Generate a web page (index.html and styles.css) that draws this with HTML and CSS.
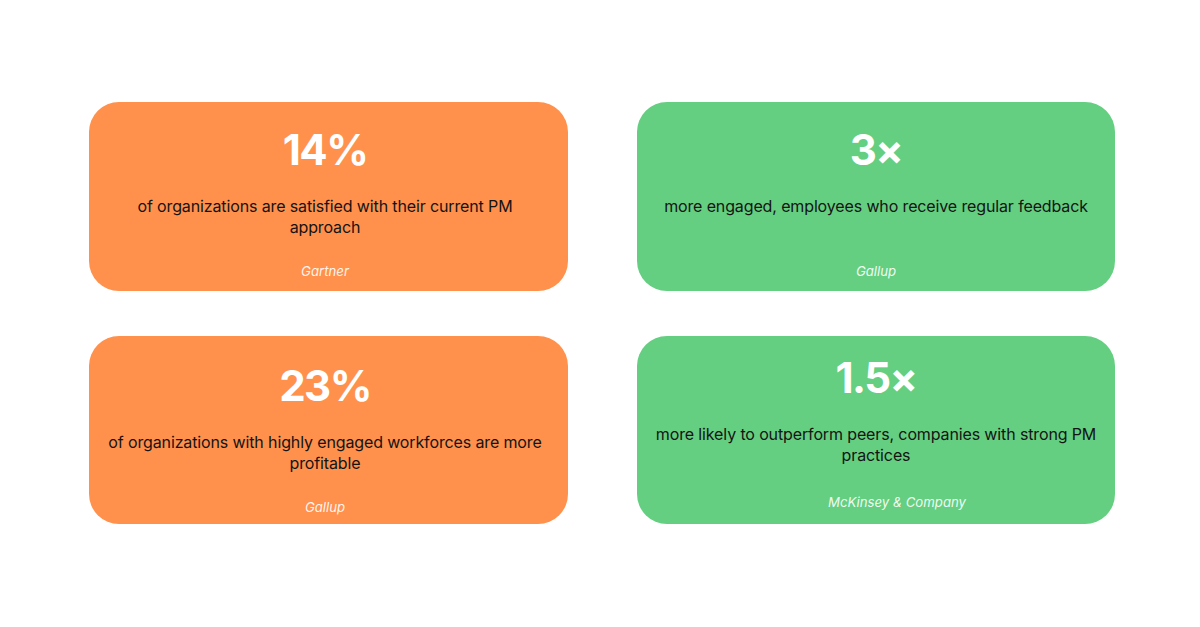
FILE: index.html
```html
<!DOCTYPE html>
<html lang="en">
<head>
<meta charset="utf-8">
<title>PM Statistics</title>
<link rel="stylesheet" href="styles.css">
</head>
<body>
<main class="grid">
  <section class="card card--orange">
    <div class="stat">14%</div>
    <p class="desc">of organizations are satisfied with their current PM approach</p>
    <div class="source">Gartner</div>
  </section>
  <section class="card card--green">
    <div class="stat">3×</div>
    <p class="desc">more engaged, employees who receive regular feedback</p>
    <div class="source">Gallup</div>
  </section>
  <section class="card card--orange card--low">
    <div class="stat">23%</div>
    <p class="desc">of organizations with highly engaged workforces are more profitable</p>
    <div class="source">Gallup</div>
  </section>
  <section class="card card--green card--high">
    <div class="stat">1.5×</div>
    <p class="desc">more likely to outperform peers, companies with strong PM practices</p>
    <div class="source source--shift">McKinsey &amp; Company</div>
  </section>
</main>
</body>
</html>
```

FILE: styles.css
```css
html, body {
  margin: 0;
  padding: 0;
  background: #ffffff;
}

body {
  width: 1200px;
  height: 627px;
  overflow: hidden;
  font-family: "Inter", "Noto Sans", sans-serif;
}

.grid {
  display: grid;
  grid-template-columns: 479px 478px;
  grid-template-rows: 189px 188px;
  column-gap: 69px;
  row-gap: 45px;
  padding: 102px 0 0 89px;
}

.card {
  display: flex;
  flex-direction: column;
  align-items: center;
  text-align: center;
  border-radius: 30px;
  padding: 23px 24px 11px 17px;
  box-sizing: border-box;
}

.card--orange {
  background: #ff914d;
}

.card--green {
  background: #64cf80;
  padding-left: 18px;
  padding-right: 18px;
}

.card--low {
  padding-top: 25px;
  padding-bottom: 8px;
}

.card--high {
  padding-top: 17px;
  padding-bottom: 13px;
}

.stat {
  font-size: 42px;
  font-weight: 700;
  line-height: 50px;
  letter-spacing: -1.5px;
  color: #ffffff;
}

.desc {
  margin: 21px 0 0;
  font-size: 16px;
  line-height: 21px;
  letter-spacing: -0.13px;
  color: #141414;
}

.source {
  margin-top: auto;
  font-size: 13.2px;
  font-style: italic;
  line-height: 17px;
  color: rgba(255, 255, 255, 0.92);
}

.source--shift {
  padding-left: 42px;
}
```
